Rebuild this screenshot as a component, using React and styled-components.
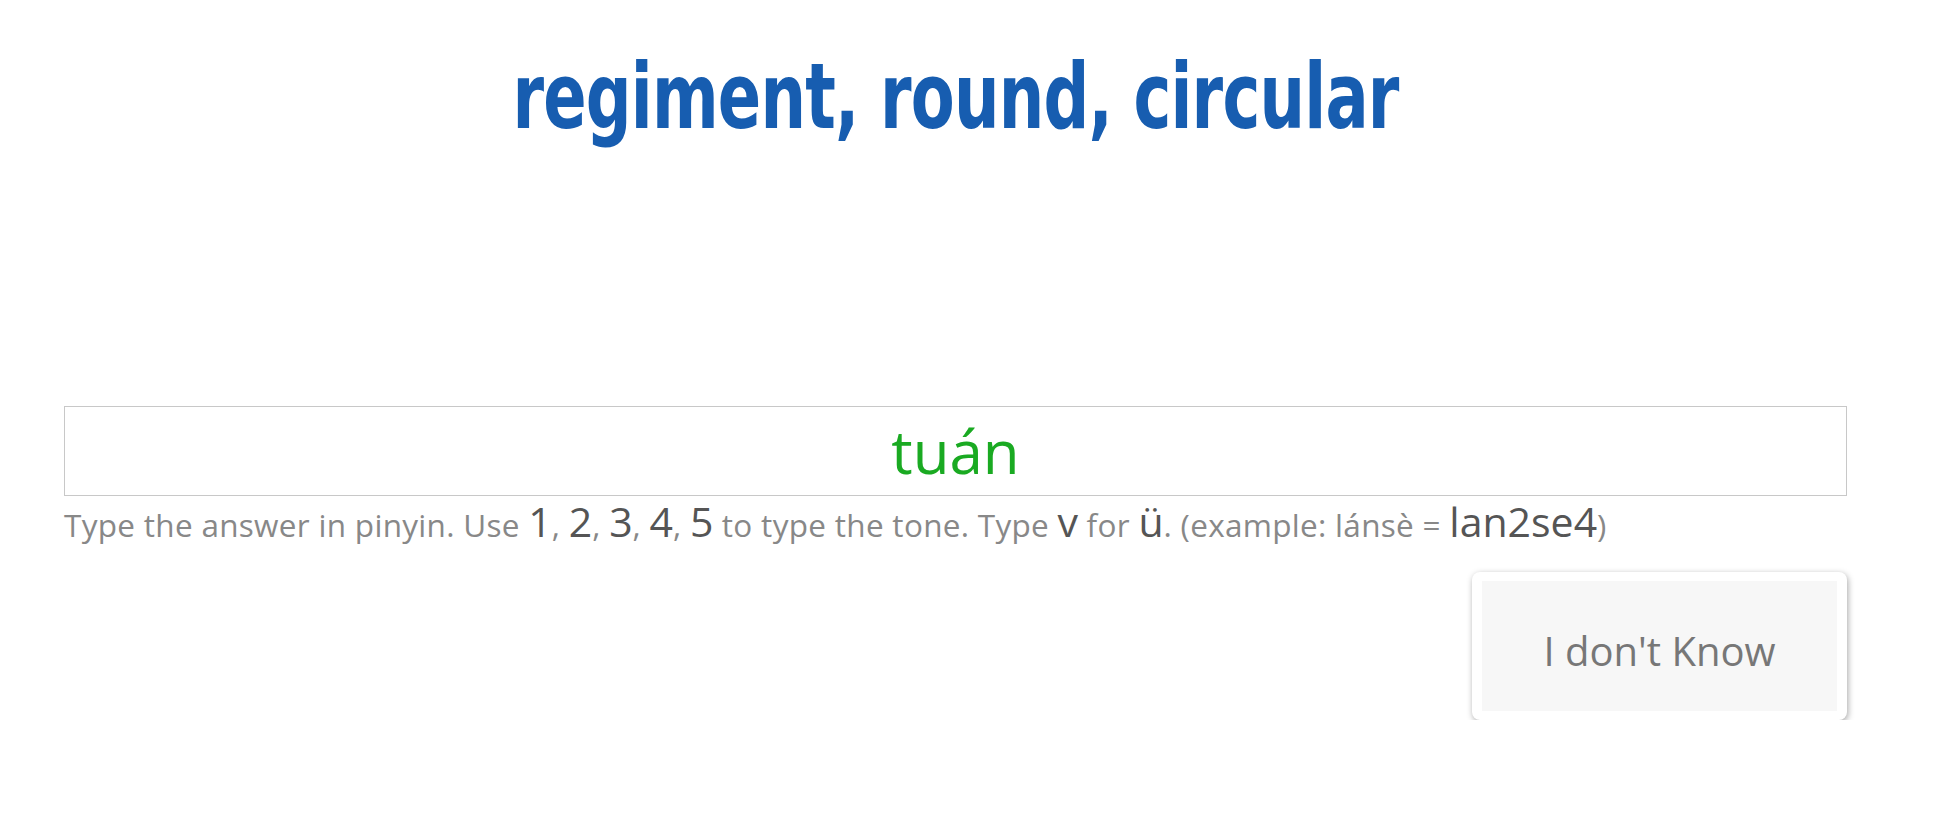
import React from "react";
import styled, { createGlobalStyle } from "styled-components";

const GlobalStyle = createGlobalStyle`
  body {
    margin: 0;
    background: #fff;
    font-family: "Open Sans", "DejaVu Sans", sans-serif;
  }
`;

const Page = styled.div`
  padding: 0 106px 0 64px;
`;

const Title = styled.h1`
  margin: 52px 0 0;
  text-align: center;
  font-family: "Liberation Sans Narrow", "DejaVu Sans Condensed", "Liberation Sans", sans-serif;
  font-stretch: condensed;
  font-weight: 700;
  font-size: 90px;
  line-height: 90px;
  letter-spacing: -1px;
  color: #175db0;
  transform: scaleX(0.79);
`;

const AnswerInput = styled.input`
  display: block;
  box-sizing: border-box;
  width: 100%;
  height: 90px;
  margin-top: 264px;
  padding: 0;
  border: 1px solid #c8c8c8;
  border-radius: 0;
  outline: none;
  background: #fff;
  text-align: center;
  font-family: "Open Sans", sans-serif;
  font-size: 60px;
  color: #1aaa22;
`;

const Hint = styled.p`
  margin: 3px 0 0;
  font-family: "Open Sans", sans-serif;
  font-size: 31.5px;
  letter-spacing: 0.3px;
  line-height: 44px;
  color: #888;
`;

const Key = styled.span`
  font-size: 41px;
  letter-spacing: 0;
  color: #555;
`;

const Actions = styled.div`
  display: flex;
  justify-content: flex-end;
  margin-top: 25px;
`;

const SkipButton = styled.button`
  box-sizing: border-box;
  width: 375px;
  height: 148px;
  padding: 9px 10px;
  border: none;
  border-radius: 8px;
  background: #fff;
  box-shadow: 1px 2px 6px rgba(0, 0, 0, 0.35);
  cursor: pointer;
`;

const SkipLabel = styled.span`
  box-sizing: border-box;
  display: flex;
  align-items: center;
  justify-content: center;
  height: 100%;
  padding-top: 8px;
  background: #f7f7f7;
  font-family: "Open Sans", sans-serif;
  font-size: 40px;
  color: #777;
`;

const tones = ["1", "2", "3", "4", "5"];

export default function App() {
  return (
    <>
      <GlobalStyle />
      <Page>
        <Title>regiment, round, circular</Title>
        <AnswerInput value="tuán" readOnly />
        <Hint>
          Type the answer in pinyin. Use{" "}
          {tones.map((t, i) => (
            <React.Fragment key={t}>
              <Key>{t}</Key>
              {i < tones.length - 1 ? ", " : " "}
            </React.Fragment>
          ))}
          to type the tone. Type <Key>v</Key> for <Key>ü</Key>. (example: lánsè ={" "}
          <Key>lan2se4</Key>)
        </Hint>
        <Actions>
          <SkipButton>
            <SkipLabel>I don't Know</SkipLabel>
          </SkipButton>
        </Actions>
      </Page>
    </>
  );
}
